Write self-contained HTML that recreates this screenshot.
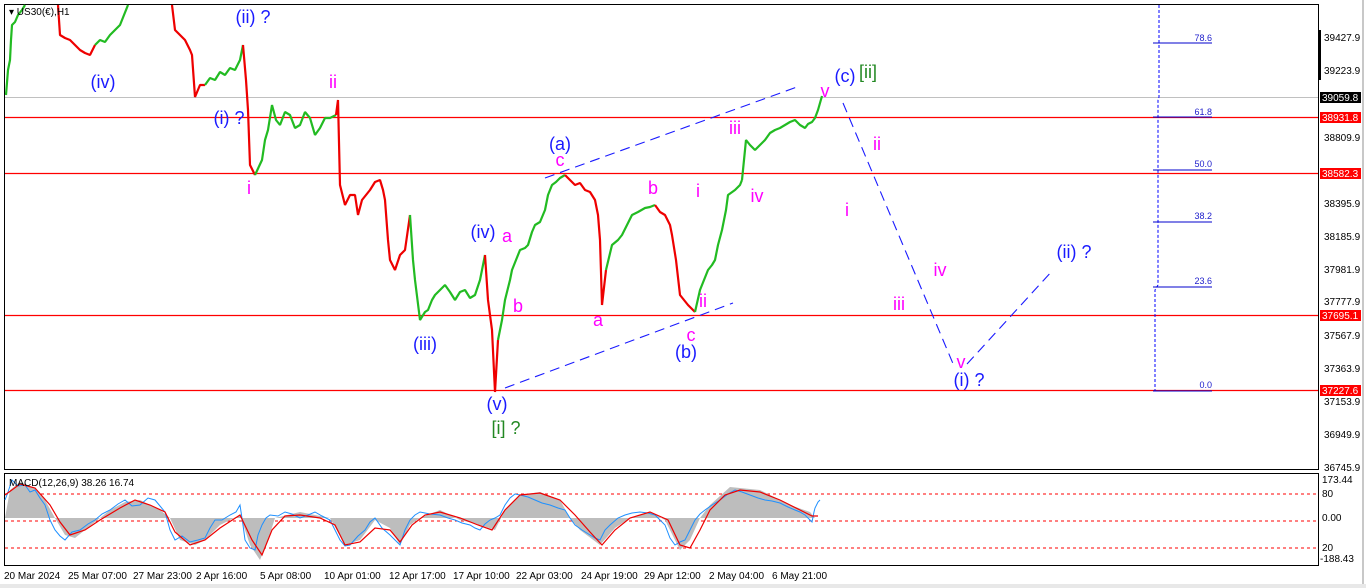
<!DOCTYPE html>
<html><head><meta charset="utf-8"><style>
html,body{margin:0;padding:0;background:#fff;width:1366px;height:588px;overflow:hidden}
svg{display:block}
text{font-family:"Liberation Sans",sans-serif}
</style></head><body>
<svg width="1366" height="588" viewBox="0 0 1366 588" xmlns="http://www.w3.org/2000/svg">
<rect width="1366" height="588" fill="#fff"/>
<line x1="1363" y1="0" x2="1363" y2="588" stroke="#c8c8c8" stroke-width="2"/>
<rect x="0" y="584" width="1366" height="4" fill="#e8e8e8"/>
<rect x="4.5" y="4.5" width="1314" height="465" fill="none" stroke="#000"/>
<rect x="4.5" y="473.5" width="1314" height="92" fill="none" stroke="#000"/>
<line x1="5" y1="97.5" x2="1318" y2="97.5" stroke="#c0c0c0"/>
<g stroke="#ff0000" stroke-width="1.2">
<line x1="5" y1="117.5" x2="1318" y2="117.5"/>
<line x1="5" y1="173.5" x2="1318" y2="173.5"/>
<line x1="5" y1="315.5" x2="1318" y2="315.5"/>
<line x1="5" y1="390.5" x2="1318" y2="390.5"/>
</g>
<path d="M1159 5 V97 L1158 100 V285 L1155 290 V391" stroke="#0000ff" stroke-dasharray="3,2" fill="none"/>
<g stroke="#0000cc">
<line x1="1153" y1="43" x2="1212" y2="43"/><line x1="1153" y1="117" x2="1212" y2="117"/>
<line x1="1153" y1="170" x2="1212" y2="170"/><line x1="1153" y1="222" x2="1212" y2="222"/>
<line x1="1153" y1="287" x2="1212" y2="287"/><line x1="1153" y1="391" x2="1212" y2="391"/>
</g>
<g font-size="9" fill="#2020cc" text-anchor="end">
<text x="1212" y="41">78.6</text><text x="1212" y="115">61.8</text><text x="1212" y="167">50.0</text>
<text x="1212" y="219">38.2</text><text x="1212" y="284">23.6</text><text x="1212" y="388">0.0</text>
</g>
<g fill="none" stroke-width="2.2" stroke-linejoin="bevel">
<polyline stroke="#22bb22" points="6,95 8,70 10,60 11,40 12,25 15,22 18,15 22,10 25,5"/>
<polyline stroke="#ee0000" points="58,5 60,35 65,38 70,40 75,45 80,50 85,53 90,55 95,45"/>
<polyline stroke="#22bb22" points="95,45 100,40 105,42 110,35 115,30 120,25 124,15 128,5"/>
<polyline stroke="#ee0000" points="172,5 175,30 180,35 185,40 190,50 192,55 195,97 200,85 205,85"/>
<polyline stroke="#22bb22" points="205,85 210,78 215,80 220,72 225,75 230,68 235,70 240,60 243,45"/>
<polyline stroke="#ee0000" points="243,45 246,80 248,110 250,165 255,175"/>
<polyline stroke="#22bb22" points="255,175 262,160 265,140 268,130 272,105 276,120 280,125 285,112 290,115 295,128 300,125 305,112 310,118 315,135 320,128 325,118 330,118 336,115"/>
<polyline stroke="#ee0000" points="336,115 338,100 340,185 345,205 350,195 355,195 358,215 362,200 370,190 375,182 380,180 383,190 385,200 388,240 390,260 395,270 400,255 405,250 410,215"/>
<polyline stroke="#22bb22" points="410,215 413,260 415,280 420,320 425,312 428,310 432,300 435,295 440,290 445,285 450,292 455,300 460,292 465,290 470,298 475,295 480,280 485,255"/>
<polyline stroke="#ee0000" points="485,255 488,300 492,330 495,392 498,340"/>
<polyline stroke="#22bb22" points="498,340 502,320 505,300 510,280 512,270 516,260 520,250 525,248 528,245 532,232 535,225 540,222 545,210 548,195 552,185 556,182 560,178 565,175"/>
<polyline stroke="#ee0000" points="565,175 570,180 575,185 580,183 585,190 590,192 595,200 598,215 600,240 602,305 606,270"/>
<polyline stroke="#22bb22" points="606,270 612,245 618,240 622,235 627,225 632,215 638,212 645,208 650,207 655,205"/>
<polyline stroke="#ee0000" points="655,205 660,212 665,215 670,225 672,235 676,260 680,295 684,300 688,305 695,312"/>
<polyline stroke="#22bb22" points="695,312 700,290 704,280 708,270 712,265 715,260 718,245 722,230 726,210 728,195 735,190 740,185 742,180"/>
<polyline stroke="#22bb22" points="742,180 746,140 750,145 755,150 760,145 765,140 770,133 775,130 780,128 785,125 790,122 795,120 800,125 805,128 808,124 812,122 815,118 818,110 822,96"/>
</g>
<g stroke="#1a1aff" stroke-dasharray="10,6" fill="none" stroke-width="1.1">
<line x1="545" y1="178" x2="797" y2="87"/>
<line x1="505" y1="388" x2="733" y2="303"/>
<polyline points="843,103 954,366"/>
<polyline points="967,364 1053,270"/>
</g>
<g font-size="18" text-anchor="middle">
<g fill="#1a1aff">
<text x="103" y="88">(iv)</text><text x="253" y="23">(ii) ?</text><text x="229" y="124">(i) ?</text>
<text x="483" y="238">(iv)</text><text x="425" y="350">(iii)</text><text x="497" y="410">(v)</text>
<text x="560" y="150">(a)</text><text x="686" y="358">(b)</text><text x="845" y="82">(c)</text>
<text x="969" y="386">(i) ?</text><text x="1074" y="258">(ii) ?</text>
</g>
<g fill="#ff00ff">
<text x="333" y="88">ii</text><text x="249" y="194">i</text><text x="507" y="242">a</text><text x="518" y="312">b</text>
<text x="560" y="166">c</text><text x="653" y="194">b</text><text x="598" y="326">a</text><text x="698" y="197">i</text>
<text x="703" y="307">ii</text><text x="691" y="341">c</text><text x="735" y="134">iii</text><text x="757" y="202">iv</text>
<text x="825" y="97">v</text><text x="877" y="150">ii</text><text x="847" y="216">i</text><text x="940" y="276">iv</text>
<text x="899" y="310">iii</text><text x="961" y="368">v</text>
</g>
<g fill="#228822">
<text x="506" y="434">[i] ?</text><text x="868" y="78">[ii]</text>
</g>
</g>
<text x="9" y="15" font-size="10" fill="#000">▾ US30(€),H1</text>
<rect x="1318" y="30" width="3" height="50" fill="#000"/>
<g font-size="10" fill="#000">
<text x="1324" y="41">39427.9</text><text x="1324" y="74">39223.9</text><text x="1324" y="141">38809.9</text>
<text x="1324" y="207">38395.9</text><text x="1324" y="240">38185.9</text><text x="1324" y="273">37981.9</text>
<text x="1324" y="305">37777.9</text><text x="1324" y="339">37567.9</text><text x="1324" y="372">37363.9</text>
<text x="1324" y="405">37153.9</text><text x="1324" y="438">36949.9</text><text x="1324" y="471">36745.9</text>
<text x="1322" y="483">173.44</text><text x="1322" y="497">80</text><text x="1322" y="521">0.00</text>
<text x="1322" y="551">20</text><text x="1320" y="562">-188.43</text>
</g>
<rect x="1320" y="92" width="41" height="11" fill="#000"/><text x="1322" y="101" font-size="10" fill="#fff">39059.8</text>
<g fill="#ff0000"><rect x="1320" y="112" width="41" height="11"/><rect x="1320" y="168" width="41" height="11"/>
<rect x="1320" y="310" width="41" height="11"/><rect x="1320" y="385" width="41" height="11"/></g>
<g font-size="10" fill="#fff"><text x="1322" y="121">38931.8</text><text x="1322" y="177">38582.3</text>
<text x="1322" y="319">37695.1</text><text x="1322" y="394">37227.6</text></g>
<g stroke="#ff0000" stroke-dasharray="3,3"><line x1="5" y1="494" x2="1318" y2="494"/><line x1="5" y1="521" x2="1318" y2="521"/><line x1="5" y1="548" x2="1318" y2="548"/></g>
<path fill="#bdbdbd" d="M5 518 L10 490 L20 482 L35 488 L45 500 L55 518 L65 535 L75 538 L85 530 L95 522 L110 510 L125 502 L140 500 L160 510 L170 518 L180 540 L195 545 L205 540 L220 525 L240 515 L250 545 L260 560 L268 540 L275 518 L300 512 L330 518 L345 545 L360 540 L375 520 L390 528 L400 545 L410 525 L420 518 L440 510 L460 520 L480 525 L495 530 L505 510 L520 495 L540 492 L560 500 L570 518 L580 530 L600 545 L615 528 L630 518 L650 512 L665 520 L680 550 L690 540 L700 518 L710 505 L730 487 L760 490 L790 505 L810 512 L815 518 Z"/>
<polyline fill="none" stroke="#1e90ff" stroke-width="1" points="5,500 8,492 12,480 18,486 25,485 30,492 35,490 40,498 45,505 50,520 55,530 60,536 65,540 72,532 80,530 88,524 95,520 102,514 110,510 118,504 125,500 132,506 140,505 148,498 155,500 160,506 165,512 170,530 175,540 182,536 190,542 198,540 205,538 210,528 215,520 222,520 230,515 236,512 240,505 243,525 245,540 250,548 255,550 258,535 262,525 266,518 270,515 278,516 285,512 292,514 300,518 308,515 315,512 322,516 330,520 335,530 340,540 345,546 350,545 358,536 365,530 370,522 375,518 382,528 390,535 395,540 400,545 405,530 410,520 415,515 420,512 430,514 440,515 448,518 455,520 462,523 470,525 475,528 480,530 485,524 490,520 495,518 500,515 505,505 510,498 515,494 520,495 528,497 535,500 542,503 550,505 558,508 565,510 570,518 575,525 582,530 590,535 595,538 600,540 605,530 610,525 618,518 625,515 632,513 640,512 648,513 655,515 660,520 665,525 670,538 675,545 680,542 685,540 690,530 695,520 700,514 705,510 712,505 720,500 728,494 735,490 742,492 750,495 758,498 765,500 772,501 780,503 788,507 795,510 800,512 805,515 810,520 812,522 814,512 815,508 818,502 820,500"/>
<polyline fill="none" stroke="#ee0000" stroke-width="1.2" points="5,495 20,484 35,488 50,505 60,522 70,535 85,530 100,520 120,508 135,500 150,505 165,512 175,532 190,545 205,540 220,528 240,515 252,540 262,555 272,530 285,516 300,515 320,518 335,525 345,545 360,542 375,528 390,530 400,542 412,525 425,515 440,512 460,518 478,525 492,530 505,510 520,495 540,493 560,500 575,515 590,532 602,545 615,530 630,518 650,512 668,520 680,545 690,548 700,530 710,510 725,495 740,490 760,492 780,500 800,510 812,516 818,516"/>
<text x="9" y="486" font-size="10" fill="#000">MACD(12,26,9) 38.26 16.74</text>
<g font-size="10" fill="#000">
<text x="4" y="579">20 Mar 2024</text><text x="68" y="579">25 Mar 07:00</text><text x="133" y="579">27 Mar 23:00</text>
<text x="196" y="579">2 Apr 16:00</text><text x="260" y="579">5 Apr 08:00</text><text x="324" y="579">10 Apr 01:00</text>
<text x="389" y="579">12 Apr 17:00</text><text x="453" y="579">17 Apr 10:00</text><text x="516" y="579">22 Apr 03:00</text>
<text x="581" y="579">24 Apr 19:00</text><text x="644" y="579">29 Apr 12:00</text><text x="709" y="579">2 May 04:00</text>
<text x="772" y="579">6 May 21:00</text>
</g>
</svg>
</body></html>
